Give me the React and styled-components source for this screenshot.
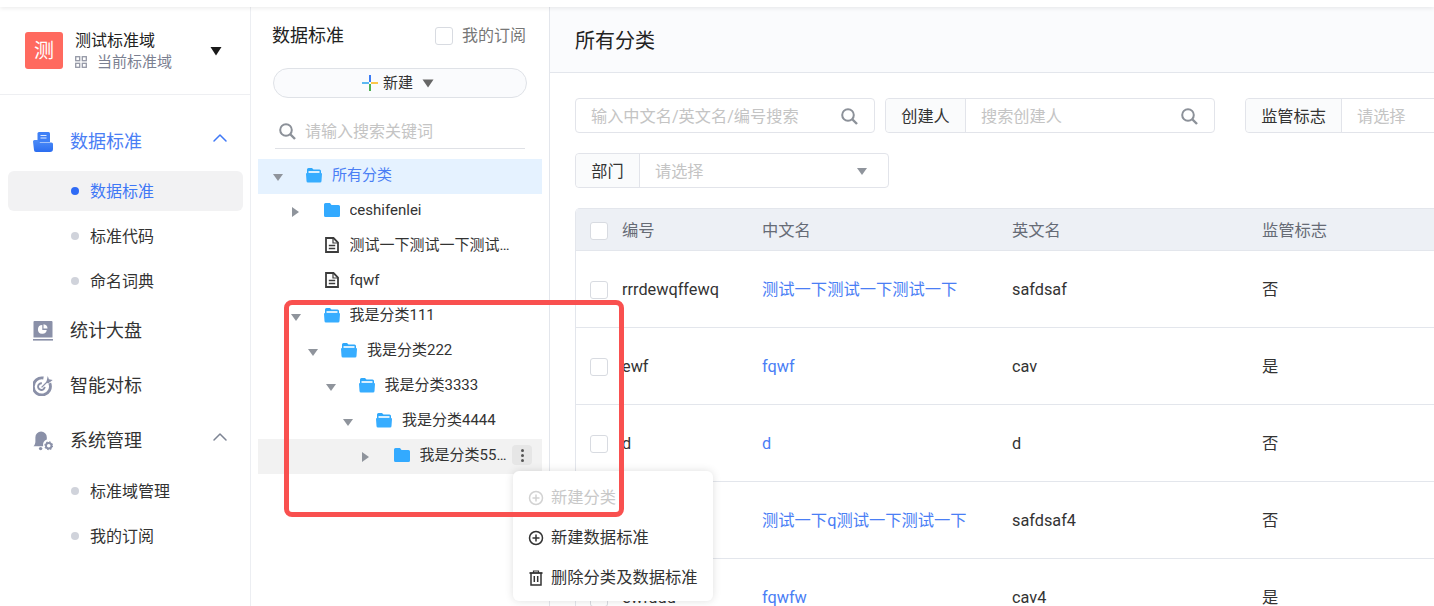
import React from 'react';
import styled, { createGlobalStyle } from 'styled-components';
import { ChevronUp } from 'lucide-react';

const GlobalStyle = createGlobalStyle`
  html, body {
    margin: 0;
    padding: 0;
    background: #fff;
    overflow: hidden;
  }
  * {
    box-sizing: border-box;
  }
  body {
    font-family: Roboto, 'Noto Sans CJK SC', sans-serif;
    line-height: 20px;
    color: #333;
  }
`;

const Page = styled.div`
  position: relative;
  width: 1434px;
  height: 606px;
  overflow: hidden;
  display: flex;
  flex-direction: column;
`;

const TopStrip = styled.div`
  height: 7px;
  flex: none;
  background: #fff;
  box-shadow: 0 1px 5px rgba(0, 0, 0, 0.09);
  position: relative;
  z-index: 2;
`;

const Body = styled.div`
  flex: 1;
  min-height: 0;
  display: flex;
`;

const Sidebar = styled.aside`
  width: 251px;
  flex: none;
  border-right: 1px solid #eceef2;
`;

const DomainHeader = styled.div`
  height: 88px;
  border-bottom: 1px solid #eeeff2;
  padding: 0 28px 0 25px;
  display: flex;
  align-items: center;
`;

const DomainLogo = styled.div`
  width: 38px;
  height: 37px;
  border-radius: 3px;
  background: #ff6a5f;
  color: #fff;
  font-size: 20px;
  display: flex;
  align-items: center;
  justify-content: center;
  margin-right: 12px;
`;

const DomainText = styled.div`
  flex: 1;
`;

const DomainName = styled.div`
  font-size: 16px;
  line-height: 22px;
  color: #222;
`;

const DomainSub = styled.div`
  display: flex;
  align-items: center;
  gap: 10px;
  font-size: 15px;
  line-height: 20px;
  color: #7b8091;
`;

const Nav = styled.nav`
  padding-top: 19px;
`;

const NavItem = styled.div`
  height: 55px;
  padding-left: 33px;
  display: flex;
  align-items: center;
  gap: 17px;
  font-size: 18px;
  color: ${p => (p.$active ? '#4a7ef5' : '#333')};

  & > svg:last-child:not(:first-child) {
    margin-left: auto;
    margin-right: 18px;
    margin-bottom: 8px;
    color: ${p => (p.$active ? '#3f78f6' : '#7d8494')};
  }
`;

const SubList = styled.div`
  margin: ${p => p.$top || 2}px 0 2px;
  display: flex;
  flex-direction: column;
  gap: 5px;
`;

const SubItem = styled.div`
  width: 235px;
  height: 40px;
  margin-left: 8px;
  padding-left: 63px;
  border-radius: 6px;
  display: flex;
  align-items: center;
  gap: 11px;
  font-size: 16px;
  background: ${p => (p.$active ? '#f2f2f3' : 'transparent')};
  color: ${p => (p.$active ? '#3f78f6' : '#333')};

  &::before {
    content: '';
    width: 8px;
    height: 8px;
    border-radius: 50%;
    background: ${p => (p.$active ? '#2f6bf5' : '#d0d3db')};
  }

  span {
    padding-top: 2px;
  }
`;

const TreePanel = styled.section`
  width: 299px;
  flex: none;
  border-right: 1px solid #e3e6ec;
  padding: 0 7px;
  position: relative;
`;

const TreeTitleRow = styled.div`
  height: 57px;
  padding: 1px 16px 0 14px;
  display: flex;
  align-items: center;
  justify-content: space-between;
`;

const TreeTitle = styled.div`
  font-size: 18px;
  color: #222;
`;

const Subscribe = styled.label`
  display: flex;
  align-items: center;
  gap: 9px;
  font-size: 16px;
  color: #777;
`;

const CheckBox = styled.span`
  display: block;
  width: 18px;
  height: 18px;
  flex: none;
  border: 1px solid #d8dbe1;
  border-radius: 3px;
  background: #fff;
`;

const NewButton = styled.div`
  margin: 4px 15px 0;
  height: 30px;
  padding-right: 4px;
  border: 1px solid #dfe2e7;
  border-radius: 15px;
  background: #fafbfd;
  display: flex;
  align-items: center;
  justify-content: center;
  gap: 5px;
  font-size: 15px;
  color: #333;

  svg:last-child {
    margin-left: 4px;
  }
`;

const TreeSearch = styled.div`
  margin: 14px 17px 10px;
  height: 37px;
  border-bottom: 1px solid #dfe1e6;
  padding: 3px 0 0 4px;
  display: flex;
  align-items: center;
  gap: 9px;
  font-size: 16px;
  color: #c4c4c4;
`;

const TreeRow = styled.div`
  position: relative;
  height: 35px;
  padding: 0 28px 3px ${p => 14 + p.$level * 17.5}px;
  display: flex;
  align-items: center;
  font-size: 15px;
  color: ${p => (p.$selected ? '#4a7ef5' : '#333')};
  background: ${p => (p.$selected ? '#e5f2ff' : p.$hover ? '#f2f2f2' : 'transparent')};
`;

const CaretSlot = styled.span`
  width: 12px;
  flex: none;
  margin-right: 22px;
  margin-top: 4px;
  display: flex;
  justify-content: center;
`;

const TreeIcon = styled.svg`
  width: 16px;
  height: 16px;
  flex: none;
  margin-right: 10px;
`;

const TreeLabel = styled.span`
  flex: 1;
  min-width: 0;
  white-space: nowrap;
  overflow: hidden;
  text-overflow: ellipsis;
`;

const KebabButton = styled.span`
  position: absolute;
  right: 10px;
  top: 6px;
  width: 20px;
  height: 20px;
  border-radius: 4px;
  background: #e6e6e6;
  display: flex;
  flex-direction: column;
  align-items: center;
  justify-content: center;
  gap: 2px;

  i {
    display: block;
    width: 3px;
    height: 3px;
    border-radius: 50%;
    background: #555;
  }
`;

const Main = styled.main`
  flex: 1;
  min-width: 0;
  overflow: hidden;
`;

const MainHeader = styled.div`
  height: 66px;
  background: #fafbfd;
  border-bottom: 1px solid #e3e6ec;
  padding: 3px 25px 0;
  display: flex;
  align-items: center;
  font-size: 20px;
  color: #222;
`;

const MainContent = styled.div`
  padding: 25px 0 0 25px;
  width: 1100px;
`;

const FilterRow = styled.div`
  display: flex;
  height: 35px;
  margin-bottom: 20px;
`;

const FilterGroup = styled.div`
  width: ${p => p.$width}px;
  height: 35px;
  flex: none;
  margin-right: ${p => p.$gap || 0}px;
  border: 1px solid #e2e4ea;
  border-radius: 4px;
  display: flex;
  align-items: center;
  font-size: 16.2px;
  background: #fff;
`;

const FilterAddon = styled.div`
  width: ${p => p.$width}px;
  height: 100%;
  flex: none;
  padding-top: 2px;
  background: #fafbfc;
  border-right: 1px solid #e2e4ea;
  border-radius: 4px 0 0 4px;
  display: flex;
  align-items: center;
  justify-content: center;
  color: #333;
`;

const FilterInput = styled.div`
  flex: 1;
  min-width: 0;
  padding: 2px ${p => p.$right || 16}px 0 15px;
  display: flex;
  align-items: center;
  justify-content: space-between;
  color: #c4c4c4;
`;

const Table = styled.div`
  border-left: 1px solid #e3e6ec;
  border-radius: 5px 0 0 0;
  font-size: 16.3px;
  overflow: hidden;
`;

const TableRow = styled.div`
  display: grid;
  grid-template-columns: 32px 140px 250px 250px 1fr;
  align-items: center;
  height: ${p => (p.$head ? '43px' : '77px')};
  background: ${p => (p.$head ? '#edf0f5' : '#fff')};
  color: ${p => (p.$head ? '#666b75' : '#333')};
  border-top: ${p => (p.$head ? '1px solid #e3e6ec' : 'none')};
  border-bottom: 1px solid #e3e6ec;
  padding: 2px 0 0 14px;
`;

const LinkCell = styled.span`
  color: #4a7ef5;
`;

const PopMenu = styled.div`
  position: absolute;
  left: 513px;
  top: 471px;
  width: 200px;
  height: 130px;
  background: #fff;
  border-radius: 6px;
  box-shadow: 0 0 8px rgba(0, 0, 0, 0.13);
  padding: 7px 0 3px;
  z-index: 3;
`;

const PopItem = styled.div`
  height: 40px;
  padding-left: 15px;
  display: flex;
  align-items: center;
  gap: 7px;
  font-size: 16.3px;
  white-space: nowrap;
  color: ${p => (p.$disabled ? '#c8c8c8' : '#333')};
`;

const Annotation = styled.div`
  position: absolute;
  left: 284px;
  top: 300px;
  width: 340px;
  height: 217px;
  border: 5px solid #f9504f;
  border-radius: 8px;
  pointer-events: none;
  z-index: 4;
`;

const SearchIcon = () => (
  <svg width="17" height="17" viewBox="0 0 17 17" fill="none" stroke="#8c9199" strokeWidth="2">
    <circle cx="7" cy="7" r="5.800" />
    <path d="M11 11l5 5" strokeWidth="2.400" />
  </svg>
);

const GridIcon = () => (
  <svg width="12" height="12" viewBox="0 0 12 12" fill="none" stroke="#9498a6" strokeWidth="1.3">
    <rect x="0.7" y="0.7" width="4" height="4" />
    <rect x="7.3" y="0.7" width="4" height="4" />
    <rect x="0.7" y="7.3" width="4" height="4" />
    <rect x="7.3" y="7.3" width="4" height="4" />
  </svg>
);

const BlackCaret = () => (
  <svg width="12" height="10" viewBox="0 0 12 10">
    <path d="M0.5 1h11L6 9.5z" fill="#1a1a1a" />
  </svg>
);

const DataIcon = () => (
  <svg width="20" height="20" viewBox="0 0 20 20">
    <defs>
      <linearGradient id="dataBlue" x1="0" y1="0" x2="0" y2="1">
        <stop offset="0%" stopColor="#4d8cf7" />
        <stop offset="100%" stopColor="#2b6df0" />
      </linearGradient>
    </defs>
    <path d="M4.5 1.500A1.500 1.500 0 0 1 6 0h9.500A1.500 1.500 0 0 1 17 1.500V10H4.500z" fill="#3f80f6" />
    <path d="M7.500 3.500h6M7.500 6h6" stroke="#dfeaff" strokeWidth="1.200" />
    <path d="M0 9.500A1.500 1.500 0 0 1 1.500 8H5l2 2.500h11.500A1.500 1.500 0 0 1 20 12v5a3 3 0 0 1-3 3H3a2 2 0 0 1-2-2z" fill="url(#dataBlue)" />
  </svg>
);

const StatIcon = () => (
  <svg width="20" height="20" viewBox="0 0 20 20">
    <path d="M1.500 0h17a1 1 0 0 1 1 1v15.500H.5V1a1 1 0 0 1 1-1z" fill="#8a90a8" />
    <rect x="0" y="18" width="20" height="1.600" fill="#8a90a8" />
    <path d="M9.300 4a4.400 4.400 0 1 0 4.400 5H9.300z" fill="#fff" />
    <path d="M10.500 3.200a4.400 4.400 0 0 1 4 4.300h-4z" fill="#fff" />
  </svg>
);

const TargetIcon = () => (
  <svg width="20" height="20" viewBox="0 0 21 21" fill="none">
    <path d="M17.600 7.500A9 9 0 1 1 11 2.100" stroke="#8a90a8" strokeWidth="3" />
    <path d="M12.800 10.500a3.500 3.500 0 1 1-3-3.800" stroke="#8a90a8" strokeWidth="2" transform="translate(-0.500 1)" />
    <path d="M9 12l6-6" stroke="#8a90a8" strokeWidth="1.300" />
    <path d="M14 6.500L15.500 0l1.200 3.500 4 .8-4.800 3.700z" fill="#8a90a8" />
  </svg>
);

const BellIcon = () => (
  <svg width="20" height="20" viewBox="0 0 21 21">
    <path d="M8.500 0.500a6 6 0 0 1 6 6v2.300a6 6 0 0 0-3.800 7.200H0.500c1.500-1.500 2-3 2-5V6.500a6 6 0 0 1 6-6z" fill="#8a90a8" />
    <circle cx="8" cy="18.500" r="1.800" fill="#8a90a8" />
    <circle cx="16.500" cy="15.500" r="2.900" fill="none" stroke="#8a90a8" strokeWidth="2" />
    <circle cx="16.500" cy="15.500" r="4" fill="none" stroke="#8a90a8" strokeWidth="1.300" strokeDasharray="1.500 1.640" />
  </svg>
);

const ColorPlus = () => (
  <svg width="16" height="16" viewBox="0 0 16 16">
    <rect x="0" y="7" width="7" height="2" fill="#5cb8f2" />
    <rect x="7" y="0" width="2" height="7" fill="#3b7cf5" />
    <rect x="9" y="7" width="7" height="2" fill="#fbc74a" />
    <rect x="7" y="9" width="2" height="7" fill="#4caf50" />
  </svg>
);

const SmallCaret = () => (
  <svg width="12" height="9" viewBox="0 0 12 9">
    <path d="M0.500 0.500h11L6 8.500z" fill="#666" />
  </svg>
);

const TreeCaret = ({ open }) =>
  open ? (
    <svg width="10" height="7" viewBox="0 0 10 7">
      <path d="M0 0h10L5 7z" fill="#8f949c" />
    </svg>
  ) : (
    <svg width="7" height="10" viewBox="0 0 7 10">
      <path d="M0 0l7 5-7 5z" fill="#8f949c" />
    </svg>
  );

const OpenFolder = () => (
  <TreeIcon viewBox="0 0 16 16">
    <path d="M1 2.500A1.500 1.500 0 0 1 2.500 1H6l1.500 1.500h6A1.500 1.500 0 0 1 15 4v3H1z" fill="#2fa8fb" />
    <rect x="2.500" y="4" width="11" height="3" fill="#d8efff" />
    <path d="M0 7a1 1 0 0 1 1-1h14a1 1 0 0 1 1 1l-.5 7a1.500 1.500 0 0 1-1.500 1.500H2A1.500 1.500 0 0 1 .5 14z" fill="#37adff" />
  </TreeIcon>
);

const ClosedFolder = () => (
  <TreeIcon viewBox="0 0 16 16">
    <path d="M0 2.500A1.500 1.500 0 0 1 1.500 1H6l1.500 2H14.500A1.500 1.500 0 0 1 16 4.500V13.500A1.500 1.500 0 0 1 14.500 15h-13A1.500 1.500 0 0 1 0 13.500z" fill="#33aaff" />
  </TreeIcon>
);

const FileIcon = () => (
  <TreeIcon viewBox="0 0 16 16">
    <path d="M2 1h7.500L14 5.500V15H2z" fill="#fff" stroke="#3c3c3c" strokeWidth="1.800" />
    <path d="M9 1v5h5" fill="none" stroke="#3c3c3c" strokeWidth="1.200" />
    <path d="M4.800 8.500h6.400M4.800 11.500h6.400" stroke="#3c3c3c" strokeWidth="1.400" />
  </TreeIcon>
);

const CirclePlus = ({ color }) => (
  <svg width="16" height="16" viewBox="0 0 16 16" fill="none" stroke={color} strokeWidth="1.500">
    <circle cx="8" cy="8" r="6.500" />
    <path d="M8 4.500v7M4.500 8h7" />
  </svg>
);

const TrashIcon = () => (
  <svg width="16" height="16" viewBox="0 0 16 16" fill="none" stroke="#333" strokeWidth="1.500">
    <path d="M1.500 3h13" strokeWidth="1.800" />
    <path d="M5.500 3V1h5v2" strokeWidth="1.200" />
    <path d="M3 3v12h10V3" />
    <path d="M6.300 6v6M9.700 6v6" />
  </svg>
);

const treeRows = [
  { level: 0, kind: 'open', open: true, label: '所有分类', selected: true },
  { level: 1, kind: 'closed', open: false, label: 'ceshifenlei' },
  { level: 1, kind: 'file', label: '测试一下测试一下测试一下测试一下' },
  { level: 1, kind: 'file', label: 'fqwf' },
  { level: 1, kind: 'open', open: true, label: '我是分类111' },
  { level: 2, kind: 'open', open: true, label: '我是分类222' },
  { level: 3, kind: 'open', open: true, label: '我是分类3333' },
  { level: 4, kind: 'open', open: true, label: '我是分类4444' },
  { level: 5, kind: 'closed', open: false, label: '我是分类55555555', hover: true },
];

const tableRows = [
  ['rrrdewqffewq', '测试一下测试一下测试一下', 'safdsaf', '否'],
  ['ewf', 'fqwf', 'cav', '是'],
  ['d', 'd', 'd', '否'],
  ['rrrdew', '测试一下q测试一下测试一下', 'safdsaf4', '否'],
  ['ewfddd', 'fqwfw', 'cav4', '是'],
];

const folderIcons = { open: OpenFolder, closed: ClosedFolder, file: FileIcon };

export default function App() {
  return (
    <Page>
      <GlobalStyle />
      <TopStrip />
      <Body>
        <Sidebar>
          <DomainHeader>
            <DomainLogo>测</DomainLogo>
            <DomainText>
              <DomainName>测试标准域</DomainName>
              <DomainSub>
                <GridIcon />
                当前标准域
              </DomainSub>
            </DomainText>
            <BlackCaret />
          </DomainHeader>
          <Nav>
            <NavItem $active>
              <DataIcon />
              数据标准
              <ChevronUp size={24} strokeWidth={1.5} />
            </NavItem>
            <SubList>
              <SubItem $active><span>数据标准</span></SubItem>
              <SubItem><span>标准代码</span></SubItem>
              <SubItem><span>命名词典</span></SubItem>
            </SubList>
            <NavItem>
              <StatIcon />
              统计大盘
            </NavItem>
            <NavItem>
              <TargetIcon />
              智能对标
            </NavItem>
            <NavItem>
              <BellIcon />
              系统管理
              <ChevronUp size={24} strokeWidth={1.5} />
            </NavItem>
            <SubList $top={3}>
              <SubItem><span>标准域管理</span></SubItem>
              <SubItem><span>我的订阅</span></SubItem>
            </SubList>
          </Nav>
        </Sidebar>

        <TreePanel>
          <TreeTitleRow>
            <TreeTitle>数据标准</TreeTitle>
            <Subscribe>
              <CheckBox />
              我的订阅
            </Subscribe>
          </TreeTitleRow>
          <NewButton>
            <ColorPlus />
            <span>新建</span>
            <SmallCaret />
          </NewButton>
          <TreeSearch>
            <SearchIcon />
            请输入搜索关键词
          </TreeSearch>
          {treeRows.map(row => {
            const Icon = folderIcons[row.kind];
            return (
              <TreeRow key={row.label} $level={row.level} $selected={row.selected} $hover={row.hover}>
                <CaretSlot>{row.kind !== 'file' && <TreeCaret open={row.open} />}</CaretSlot>
                <Icon />
                <TreeLabel>{row.label}</TreeLabel>
                {row.hover && (
                  <KebabButton>
                    <i />
                    <i />
                    <i />
                  </KebabButton>
                )}
              </TreeRow>
            );
          })}
        </TreePanel>

        <Main>
          <MainHeader>所有分类</MainHeader>
          <MainContent>
            <FilterRow>
              <FilterGroup $width={300} $gap={10}>
                <FilterInput>
                  输入中文名/英文名/编号搜索
                  <SearchIcon />
                </FilterInput>
              </FilterGroup>
              <FilterGroup $width={330} $gap={30}>
                <FilterAddon $width={80}>创建人</FilterAddon>
                <FilterInput>
                  搜索创建人
                  <SearchIcon />
                </FilterInput>
              </FilterGroup>
              <FilterGroup $width={314}>
                <FilterAddon $width={96}>监管标志</FilterAddon>
                <FilterInput>请选择</FilterInput>
              </FilterGroup>
            </FilterRow>
            <FilterRow>
              <FilterGroup $width={314}>
                <FilterAddon $width={64}>部门</FilterAddon>
                <FilterInput $right={21}>
                  请选择
                  <TreeCaret open />
                </FilterInput>
              </FilterGroup>
            </FilterRow>
            <Table>
              <TableRow $head>
                <CheckBox />
                <span>编号</span>
                <span>中文名</span>
                <span>英文名</span>
                <span>监管标志</span>
              </TableRow>
              {tableRows.map(([code, name, en, flag]) => (
                <TableRow key={code}>
                  <CheckBox />
                  <span>{code}</span>
                  <LinkCell>{name}</LinkCell>
                  <span>{en}</span>
                  <span>{flag}</span>
                </TableRow>
              ))}
            </Table>
          </MainContent>
        </Main>
      </Body>

      <PopMenu>
        <PopItem $disabled>
          <CirclePlus color="#d2d2d2" />
          新建分类
        </PopItem>
        <PopItem>
          <CirclePlus color="#333" />
          新建数据标准
        </PopItem>
        <PopItem>
          <TrashIcon />
          删除分类及数据标准
        </PopItem>
      </PopMenu>
      <Annotation />
    </Page>
  );
}
